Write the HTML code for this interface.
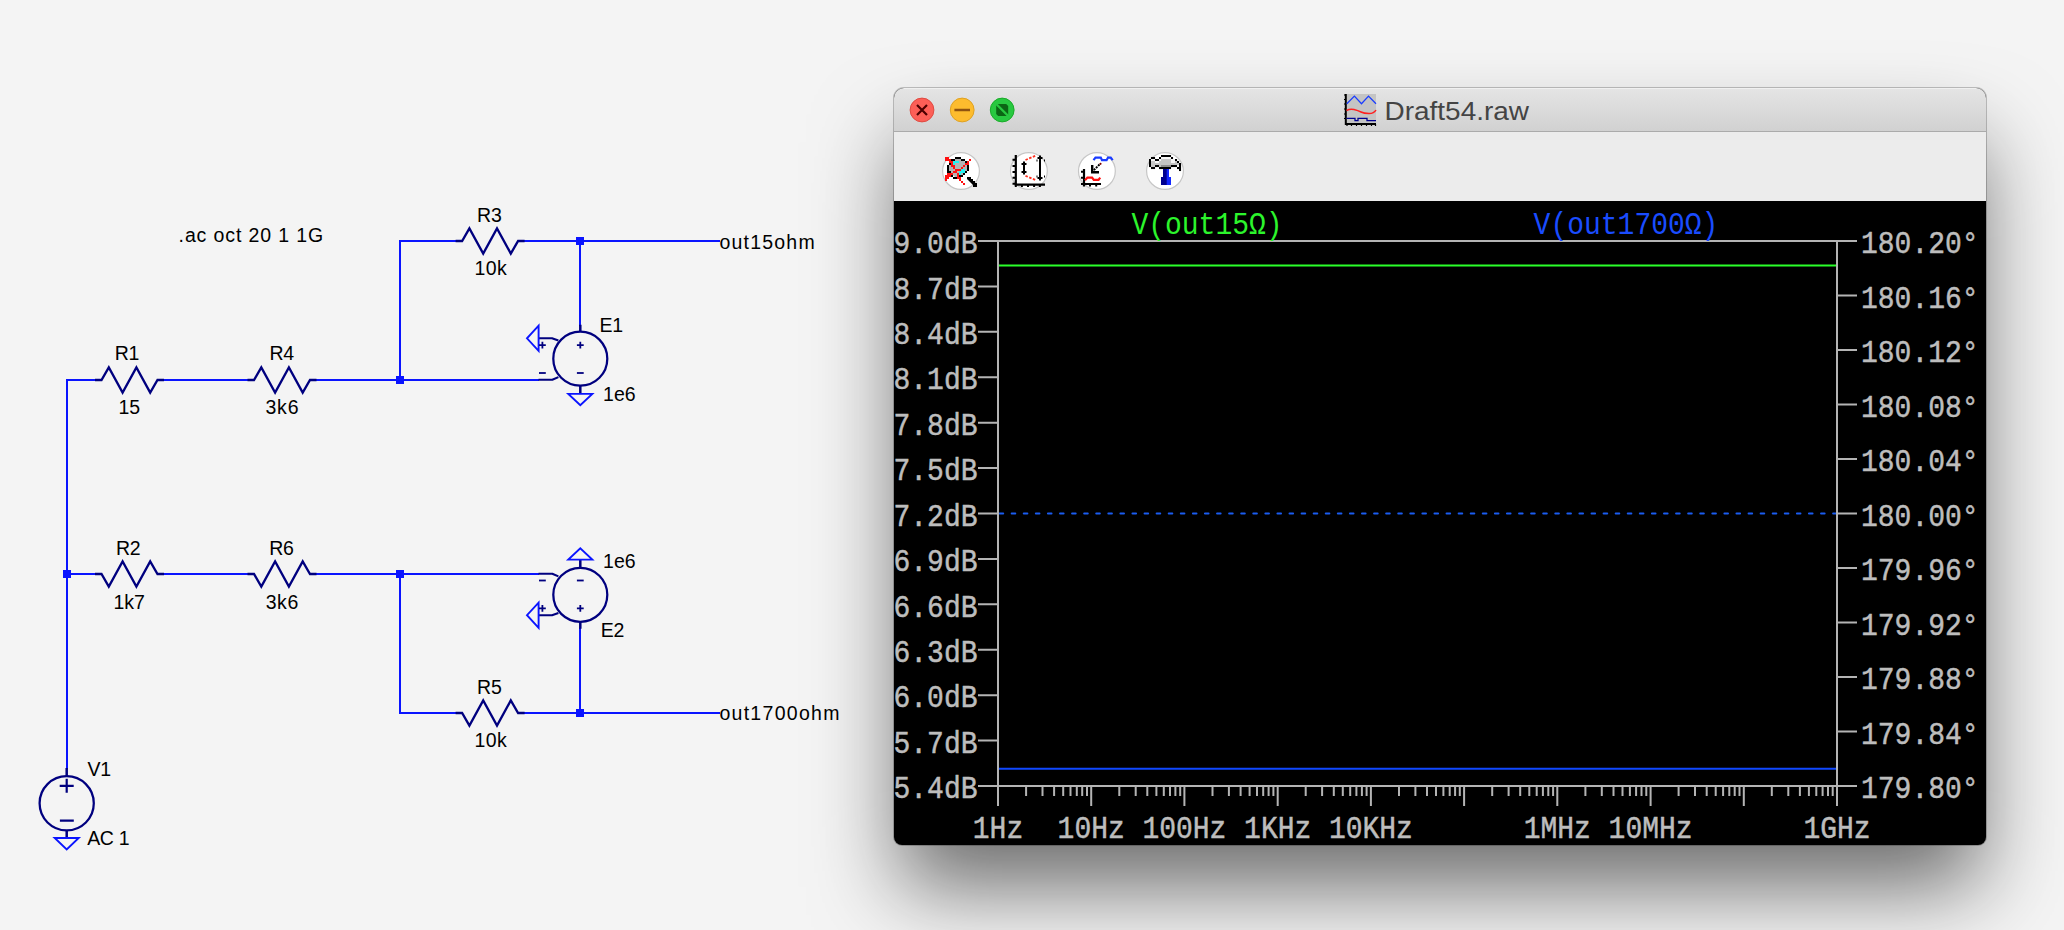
<!DOCTYPE html>
<html><head><meta charset="utf-8"><style>
html,body{margin:0;padding:0;width:2064px;height:930px;overflow:hidden;background:#f4f4f4;font-family:"Liberation Sans",sans-serif}
</style></head><body>
<svg width="2064" height="930" style="position:absolute;left:0;top:0" font-family="Liberation Sans, sans-serif">
<path d="M67,768 L67,380 L95,380" fill="none" stroke="#0a14ff" stroke-width="2" stroke-linejoin="miter" stroke-linecap="square"/>
<path d="M164,380 L247.5,380" fill="none" stroke="#0a14ff" stroke-width="2" stroke-linejoin="miter" stroke-linecap="square"/>
<path d="M316.5,380 L538,380" fill="none" stroke="#0a14ff" stroke-width="2" stroke-linejoin="miter" stroke-linecap="square"/>
<path d="M400,380 L400,241 L455.6,241" fill="none" stroke="#0a14ff" stroke-width="2" stroke-linejoin="miter" stroke-linecap="square"/>
<path d="M524.8,241 L719,241" fill="none" stroke="#0a14ff" stroke-width="2" stroke-linejoin="miter" stroke-linecap="square"/>
<path d="M580,241 L580,325" fill="none" stroke="#0a14ff" stroke-width="2" stroke-linejoin="miter" stroke-linecap="square"/>
<rect x="396" y="376" width="8" height="8" fill="#0a14ff"/>
<rect x="576" y="237" width="8" height="8" fill="#0a14ff"/>
<path d="M67,574 L95,574" fill="none" stroke="#0a14ff" stroke-width="2" stroke-linejoin="miter" stroke-linecap="square"/>
<path d="M164,574 L247.5,574" fill="none" stroke="#0a14ff" stroke-width="2" stroke-linejoin="miter" stroke-linecap="square"/>
<path d="M316.5,574 L538,574" fill="none" stroke="#0a14ff" stroke-width="2" stroke-linejoin="miter" stroke-linecap="square"/>
<path d="M400,574 L400,713 L455.6,713" fill="none" stroke="#0a14ff" stroke-width="2" stroke-linejoin="miter" stroke-linecap="square"/>
<path d="M524.8,713 L719,713" fill="none" stroke="#0a14ff" stroke-width="2" stroke-linejoin="miter" stroke-linecap="square"/>
<path d="M580,629 L580,713" fill="none" stroke="#0a14ff" stroke-width="2" stroke-linejoin="miter" stroke-linecap="square"/>
<rect x="63" y="570" width="8" height="8" fill="#0a14ff"/>
<rect x="396" y="570" width="8" height="8" fill="#0a14ff"/>
<rect x="576" y="709" width="8" height="8" fill="#0a14ff"/>
<path d="M95.00,380.00 L101.50,380.00 L108.80,367.40 L122.60,392.60 L136.40,367.40 L150.20,392.60 L157.50,380.00 L164.00,380.00" fill="none" stroke="#00007f" stroke-width="2.3" stroke-linejoin="miter" stroke-miterlimit="10"/>
<path d="M247.50,380.00 L254.00,380.00 L261.30,367.40 L275.10,392.60 L288.90,367.40 L302.70,392.60 L310.00,380.00 L316.50,380.00" fill="none" stroke="#00007f" stroke-width="2.3" stroke-linejoin="miter" stroke-miterlimit="10"/>
<path d="M455.60,241.00 L462.10,241.00 L469.40,228.40 L483.20,253.60 L497.00,228.40 L510.80,253.60 L518.10,241.00 L524.60,241.00" fill="none" stroke="#00007f" stroke-width="2.3" stroke-linejoin="miter" stroke-miterlimit="10"/>
<path d="M95.00,574.00 L101.50,574.00 L108.80,586.60 L122.60,561.40 L136.40,586.60 L150.20,561.40 L157.50,574.00 L164.00,574.00" fill="none" stroke="#00007f" stroke-width="2.3" stroke-linejoin="miter" stroke-miterlimit="10"/>
<path d="M247.50,574.00 L254.00,574.00 L261.30,586.60 L275.10,561.40 L288.90,586.60 L302.70,561.40 L310.00,574.00 L316.50,574.00" fill="none" stroke="#00007f" stroke-width="2.3" stroke-linejoin="miter" stroke-miterlimit="10"/>
<path d="M455.60,713.00 L462.10,713.00 L469.40,725.60 L483.20,700.40 L497.00,725.60 L510.80,700.40 L518.10,713.00 L524.60,713.00" fill="none" stroke="#00007f" stroke-width="2.3" stroke-linejoin="miter" stroke-miterlimit="10"/>
<circle cx="580.3" cy="358.7" r="27" fill="none" stroke="#00007f" stroke-width="2.25"/>
<path d="M580.3,324.7 L580.3,331.7 M580.3,385.7 L580.3,393.4" stroke="#00007f" stroke-width="2.5" fill="none"/>
<path d="M568.3,393.9 L592.3,393.9 L580.3,405.3 Z" fill="none" stroke="#0a14ff" stroke-width="1.9"/>
<path d="M539,338.3 L552,338.3 L558.4,340.59999999999997" stroke="#00007f" stroke-width="2.1" fill="none" stroke-linejoin="round"/>
<path d="M538.6,325.59999999999997 L538.6,350.8 L527,338.3 Z" fill="none" stroke="#0a14ff" stroke-width="1.9"/>
<path d="M538.5,379.8 L552.3,379.8 L558.4,377.09999999999997" stroke="#00007f" stroke-width="2.1" fill="none" stroke-linejoin="round"/>
<path d="M539.0,345.09999999999997 L545.8,345.09999999999997 M542.4,341.7 L542.4,348.49999999999994" stroke="#00007f" stroke-width="1.8"/>
<path d="M539.0,373.0 L545.8,373.0" stroke="#00007f" stroke-width="1.8"/>
<path d="M576.9,345.09999999999997 L583.6999999999999,345.09999999999997 M580.3,341.7 L580.3,348.49999999999994" stroke="#00007f" stroke-width="1.8"/>
<path d="M576.9,373.0 L583.6999999999999,373.0" stroke="#00007f" stroke-width="1.8"/>
<circle cx="580.3" cy="594.8" r="27" fill="none" stroke="#00007f" stroke-width="2.25"/>
<path d="M580.3,628.8 L580.3,621.8 M580.3,567.8 L580.3,560.0999999999999" stroke="#00007f" stroke-width="2.5" fill="none"/>
<path d="M568.3,559.5999999999999 L592.3,559.5999999999999 L580.3,548.1999999999999 Z" fill="none" stroke="#0a14ff" stroke-width="1.9"/>
<path d="M539,615.1999999999999 L552,615.1999999999999 L558.4,612.9" stroke="#00007f" stroke-width="2.1" fill="none" stroke-linejoin="round"/>
<path d="M538.6,627.9 L538.6,602.6999999999999 L527,615.1999999999999 Z" fill="none" stroke="#0a14ff" stroke-width="1.9"/>
<path d="M538.5,573.6999999999999 L552.3,573.6999999999999 L558.4,576.4" stroke="#00007f" stroke-width="2.1" fill="none" stroke-linejoin="round"/>
<path d="M539.0,608.4 L545.8,608.4 M542.4,605.0 L542.4,611.8" stroke="#00007f" stroke-width="1.8"/>
<path d="M539.0,580.5 L545.8,580.5" stroke="#00007f" stroke-width="1.8"/>
<path d="M576.9,608.4 L583.6999999999999,608.4 M580.3,605.0 L580.3,611.8" stroke="#00007f" stroke-width="1.8"/>
<path d="M576.9,580.5 L583.6999999999999,580.5" stroke="#00007f" stroke-width="1.8"/>
<circle cx="66.7" cy="803.3" r="27.1" fill="none" stroke="#00007f" stroke-width="2.25"/>
<path d="M66.7,768 L66.7,776 M66.7,830 L66.7,837.5" stroke="#00007f" stroke-width="2.5"/>
<path d="M59.7,785.8 L73.7,785.8 M66.7,778.8 L66.7,792.8 M59.9,820.6 L73.8,820.6" stroke="#00007f" stroke-width="2.2"/>
<path d="M54.7,838 L78.7,838 L66.7,849.4 Z" fill="none" stroke="#0a14ff" stroke-width="1.9"/>
<text x="114.65" y="360" font-size="19.5" letter-spacing="-0.30">R1</text>
<text x="118.62" y="414" font-size="19.5" letter-spacing="-0.30">15</text>
<text x="269.40" y="359.8" font-size="19.5" letter-spacing="-0.30">R4</text>
<text x="265.40" y="414.1" font-size="19.5" letter-spacing="0.85">3k6</text>
<text x="477.10" y="221.9" font-size="19.5" letter-spacing="-0.30">R3</text>
<text x="474.40" y="275.3" font-size="19.5" letter-spacing="0.43">10k</text>
<text x="116.00" y="555.1" font-size="19.5" letter-spacing="-0.30">R2</text>
<text x="113.50" y="608.7" font-size="19.5" letter-spacing="0.00">1k7</text>
<text x="269.30" y="555.1" font-size="19.5" letter-spacing="-0.30">R6</text>
<text x="265.70" y="608.7" font-size="19.5" letter-spacing="0.55">3k6</text>
<text x="477.10" y="694.4" font-size="19.5" letter-spacing="-0.30">R5</text>
<text x="474.40" y="747.3" font-size="19.5" letter-spacing="0.43">10k</text>
<text x="178.60" y="241.8" font-size="19.5" letter-spacing="0.88">.ac oct 20 1 1G</text>
<text x="719.40" y="249" font-size="19.5" letter-spacing="1.22">out15ohm</text>
<text x="719.40" y="719.8" font-size="19.5" letter-spacing="1.29">out1700ohm</text>
<text x="599.43" y="332.2" font-size="19.5" letter-spacing="-0.30">E1</text>
<text x="603.00" y="400.8" font-size="19.5" letter-spacing="0.05">1e6</text>
<text x="600.68" y="637" font-size="19.5" letter-spacing="-0.30">E2</text>
<text x="603.00" y="567.8" font-size="19.5" letter-spacing="0.05">1e6</text>
<text x="87.47" y="775.8" font-size="19.5" letter-spacing="-0.30">V1</text>
<text x="87.17" y="844.6" font-size="19.5" letter-spacing="-0.30">AC 1</text>
</svg>
<div id="win" style="position:absolute;left:894px;top:88px;width:1092px;height:757px;border-radius:10px 10px 8px 8px;box-shadow:0 0 0 1px rgba(0,0,0,0.22),0 48px 85px -6px rgba(0,0,0,0.56);overflow:hidden;background:#000">
<div style="position:absolute;left:0;top:0;width:100%;height:43px;background:linear-gradient(#f0f0f0 0px,#f0f0f0 1px,#e4e4e4 1.5px,#d1d1d1 43px)"></div>
<div style="position:absolute;left:0;top:43px;width:100%;height:1px;background:#ababab"></div>
<div style="position:absolute;left:0;top:44px;width:100%;height:69px;background:#ececec"></div>
<svg width="1092" height="757" style="position:absolute;left:0;top:0">
<circle cx="28" cy="22" r="11.9" fill="#fc5f57" stroke="#de4a41" stroke-width="1"/>
<circle cx="68.20000000000005" cy="22" r="11.9" fill="#fdbc2e" stroke="#dea123" stroke-width="1"/>
<circle cx="108.20000000000005" cy="22" r="11.9" fill="#28c840" stroke="#1aab29" stroke-width="1"/>
<path d="M23,17 L33,27 M33,17 L23,27" stroke="#4d0000" stroke-width="2.2"/>
<path d="M60.40000000000005,22 L76.00000000000004,22" stroke="#8f5310" stroke-width="2.3"/>
<path d="M102.20000000000005,16 L112.20000000000005,16 L114.20000000000005,18 L114.20000000000005,28 L104.20000000000005,28 L102.20000000000005,26 Z" fill="#0b6514"/>
<path d="M101.20000000000005,15 L115.20000000000005,29" stroke="#28c840" stroke-width="2.4"/>
<g transform="translate(-894,-88)">
<path d="M998,241 L1837,241 M998,241 L998,786 M1837,241 L1837,786 M998,786 L1837,786" stroke="#b4b4b4" stroke-width="2" fill="none"/>
<text transform="translate(977.5,253.2) scale(1,1.14)" text-anchor="end" font-family="Liberation Mono, monospace" font-size="28" fill="#bdbdbd" stroke="#bdbdbd" stroke-width="0.45">9.0dB</text>
<text transform="translate(977.5,298.6) scale(1,1.14)" text-anchor="end" font-family="Liberation Mono, monospace" font-size="28" fill="#bdbdbd" stroke="#bdbdbd" stroke-width="0.45">8.7dB</text>
<text transform="translate(977.5,344.0) scale(1,1.14)" text-anchor="end" font-family="Liberation Mono, monospace" font-size="28" fill="#bdbdbd" stroke="#bdbdbd" stroke-width="0.45">8.4dB</text>
<text transform="translate(977.5,389.4) scale(1,1.14)" text-anchor="end" font-family="Liberation Mono, monospace" font-size="28" fill="#bdbdbd" stroke="#bdbdbd" stroke-width="0.45">8.1dB</text>
<text transform="translate(977.5,434.9) scale(1,1.14)" text-anchor="end" font-family="Liberation Mono, monospace" font-size="28" fill="#bdbdbd" stroke="#bdbdbd" stroke-width="0.45">7.8dB</text>
<text transform="translate(977.5,480.3) scale(1,1.14)" text-anchor="end" font-family="Liberation Mono, monospace" font-size="28" fill="#bdbdbd" stroke="#bdbdbd" stroke-width="0.45">7.5dB</text>
<text transform="translate(977.5,525.7) scale(1,1.14)" text-anchor="end" font-family="Liberation Mono, monospace" font-size="28" fill="#bdbdbd" stroke="#bdbdbd" stroke-width="0.45">7.2dB</text>
<text transform="translate(977.5,571.1) scale(1,1.14)" text-anchor="end" font-family="Liberation Mono, monospace" font-size="28" fill="#bdbdbd" stroke="#bdbdbd" stroke-width="0.45">6.9dB</text>
<text transform="translate(977.5,616.5) scale(1,1.14)" text-anchor="end" font-family="Liberation Mono, monospace" font-size="28" fill="#bdbdbd" stroke="#bdbdbd" stroke-width="0.45">6.6dB</text>
<text transform="translate(977.5,662.0) scale(1,1.14)" text-anchor="end" font-family="Liberation Mono, monospace" font-size="28" fill="#bdbdbd" stroke="#bdbdbd" stroke-width="0.45">6.3dB</text>
<text transform="translate(977.5,707.4) scale(1,1.14)" text-anchor="end" font-family="Liberation Mono, monospace" font-size="28" fill="#bdbdbd" stroke="#bdbdbd" stroke-width="0.45">6.0dB</text>
<text transform="translate(977.5,752.8) scale(1,1.14)" text-anchor="end" font-family="Liberation Mono, monospace" font-size="28" fill="#bdbdbd" stroke="#bdbdbd" stroke-width="0.45">5.7dB</text>
<text transform="translate(977.5,798.2) scale(1,1.14)" text-anchor="end" font-family="Liberation Mono, monospace" font-size="28" fill="#bdbdbd" stroke="#bdbdbd" stroke-width="0.45">5.4dB</text>
<text transform="translate(1861,253.2) scale(1,1.14)" font-family="Liberation Mono, monospace" font-size="28" fill="#bdbdbd" stroke="#bdbdbd" stroke-width="0.45">180.20°</text>
<text transform="translate(1861,307.7) scale(1,1.14)" font-family="Liberation Mono, monospace" font-size="28" fill="#bdbdbd" stroke="#bdbdbd" stroke-width="0.45">180.16°</text>
<text transform="translate(1861,362.2) scale(1,1.14)" font-family="Liberation Mono, monospace" font-size="28" fill="#bdbdbd" stroke="#bdbdbd" stroke-width="0.45">180.12°</text>
<text transform="translate(1861,416.7) scale(1,1.14)" font-family="Liberation Mono, monospace" font-size="28" fill="#bdbdbd" stroke="#bdbdbd" stroke-width="0.45">180.08°</text>
<text transform="translate(1861,471.2) scale(1,1.14)" font-family="Liberation Mono, monospace" font-size="28" fill="#bdbdbd" stroke="#bdbdbd" stroke-width="0.45">180.04°</text>
<text transform="translate(1861,525.7) scale(1,1.14)" font-family="Liberation Mono, monospace" font-size="28" fill="#bdbdbd" stroke="#bdbdbd" stroke-width="0.45">180.00°</text>
<text transform="translate(1861,580.2) scale(1,1.14)" font-family="Liberation Mono, monospace" font-size="28" fill="#bdbdbd" stroke="#bdbdbd" stroke-width="0.45">179.96°</text>
<text transform="translate(1861,634.7) scale(1,1.14)" font-family="Liberation Mono, monospace" font-size="28" fill="#bdbdbd" stroke="#bdbdbd" stroke-width="0.45">179.92°</text>
<text transform="translate(1861,689.2) scale(1,1.14)" font-family="Liberation Mono, monospace" font-size="28" fill="#bdbdbd" stroke="#bdbdbd" stroke-width="0.45">179.88°</text>
<text transform="translate(1861,743.7) scale(1,1.14)" font-family="Liberation Mono, monospace" font-size="28" fill="#bdbdbd" stroke="#bdbdbd" stroke-width="0.45">179.84°</text>
<text transform="translate(1861,798.2) scale(1,1.14)" font-family="Liberation Mono, monospace" font-size="28" fill="#bdbdbd" stroke="#bdbdbd" stroke-width="0.45">179.80°</text>
<path d="M978,241.0 L998,241.0 M978,286.4 L998,286.4 M978,331.8 L998,331.8 M978,377.2 L998,377.2 M978,422.7 L998,422.7 M978,468.1 L998,468.1 M978,513.5 L998,513.5 M978,558.9 L998,558.9 M978,604.3 L998,604.3 M978,649.8 L998,649.8 M978,695.2 L998,695.2 M978,740.6 L998,740.6 M978,786.0 L998,786.0 M1837,241.0 L1857,241.0 M1837,295.5 L1857,295.5 M1837,350.0 L1857,350.0 M1837,404.5 L1857,404.5 M1837,459.0 L1857,459.0 M1837,513.5 L1857,513.5 M1837,568.0 L1857,568.0 M1837,622.5 L1857,622.5 M1837,677.0 L1857,677.0 M1837,731.5 L1857,731.5 M1837,786.0 L1857,786.0 M998.0,786 L998.0,806 M1026.1,786 L1026.1,796 M1042.5,786 L1042.5,796 M1054.1,786 L1054.1,796 M1063.2,786 L1063.2,796 M1070.5,786 L1070.5,796 M1076.8,786 L1076.8,796 M1082.2,786 L1082.2,796 M1087.0,786 L1087.0,796 M1091.2,786 L1091.2,806 M1119.3,786 L1119.3,796 M1135.7,786 L1135.7,796 M1147.3,786 L1147.3,796 M1156.4,786 L1156.4,796 M1163.8,786 L1163.8,796 M1170.0,786 L1170.0,796 M1175.4,786 L1175.4,796 M1180.2,786 L1180.2,796 M1184.4,786 L1184.4,806 M1212.5,786 L1212.5,796 M1228.9,786 L1228.9,796 M1240.6,786 L1240.6,796 M1249.6,786 L1249.6,796 M1257.0,786 L1257.0,796 M1263.2,786 L1263.2,796 M1268.6,786 L1268.6,796 M1273.4,786 L1273.4,796 M1277.7,786 L1277.7,806 M1305.7,786 L1305.7,796 M1322.1,786 L1322.1,796 M1333.8,786 L1333.8,796 M1342.8,786 L1342.8,796 M1350.2,786 L1350.2,796 M1356.4,786 L1356.4,796 M1361.9,786 L1361.9,796 M1366.6,786 L1366.6,796 M1370.9,786 L1370.9,806 M1399.0,786 L1399.0,796 M1415.4,786 L1415.4,796 M1427.0,786 L1427.0,796 M1436.0,786 L1436.0,796 M1443.4,786 L1443.4,796 M1449.7,786 L1449.7,796 M1455.1,786 L1455.1,796 M1459.8,786 L1459.8,796 M1464.1,786 L1464.1,806 M1492.2,786 L1492.2,796 M1508.6,786 L1508.6,796 M1520.2,786 L1520.2,796 M1529.3,786 L1529.3,796 M1536.7,786 L1536.7,796 M1542.9,786 L1542.9,796 M1548.3,786 L1548.3,796 M1553.1,786 L1553.1,796 M1557.3,786 L1557.3,806 M1585.4,786 L1585.4,796 M1601.8,786 L1601.8,796 M1613.5,786 L1613.5,796 M1622.5,786 L1622.5,796 M1629.9,786 L1629.9,796 M1636.1,786 L1636.1,796 M1641.5,786 L1641.5,796 M1646.3,786 L1646.3,796 M1650.6,786 L1650.6,806 M1678.6,786 L1678.6,796 M1695.0,786 L1695.0,796 M1706.7,786 L1706.7,796 M1715.7,786 L1715.7,796 M1723.1,786 L1723.1,796 M1729.3,786 L1729.3,796 M1734.7,786 L1734.7,796 M1739.5,786 L1739.5,796 M1743.8,786 L1743.8,806 M1771.8,786 L1771.8,796 M1788.3,786 L1788.3,796 M1799.9,786 L1799.9,796 M1808.9,786 L1808.9,796 M1816.3,786 L1816.3,796 M1822.6,786 L1822.6,796 M1828.0,786 L1828.0,796 M1832.7,786 L1832.7,796 M1837.0,786 L1837.0,806" stroke="#b4b4b4" stroke-width="2" fill="none"/>
<text transform="translate(998.0,838.2) scale(1,1.14)" text-anchor="middle" font-family="Liberation Mono, monospace" font-size="28" fill="#bdbdbd" stroke="#bdbdbd" stroke-width="0.45">1Hz</text>
<text transform="translate(1091.2,838.2) scale(1,1.14)" text-anchor="middle" font-family="Liberation Mono, monospace" font-size="28" fill="#bdbdbd" stroke="#bdbdbd" stroke-width="0.45">10Hz</text>
<text transform="translate(1184.4,838.2) scale(1,1.14)" text-anchor="middle" font-family="Liberation Mono, monospace" font-size="28" fill="#bdbdbd" stroke="#bdbdbd" stroke-width="0.45">100Hz</text>
<text transform="translate(1277.7,838.2) scale(1,1.14)" text-anchor="middle" font-family="Liberation Mono, monospace" font-size="28" fill="#bdbdbd" stroke="#bdbdbd" stroke-width="0.45">1KHz</text>
<text transform="translate(1370.9,838.2) scale(1,1.14)" text-anchor="middle" font-family="Liberation Mono, monospace" font-size="28" fill="#bdbdbd" stroke="#bdbdbd" stroke-width="0.45">10KHz</text>
<text transform="translate(1557.3,838.2) scale(1,1.14)" text-anchor="middle" font-family="Liberation Mono, monospace" font-size="28" fill="#bdbdbd" stroke="#bdbdbd" stroke-width="0.45">1MHz</text>
<text transform="translate(1650.6,838.2) scale(1,1.14)" text-anchor="middle" font-family="Liberation Mono, monospace" font-size="28" fill="#bdbdbd" stroke="#bdbdbd" stroke-width="0.45">10MHz</text>
<text transform="translate(1837.0,838.2) scale(1,1.14)" text-anchor="middle" font-family="Liberation Mono, monospace" font-size="28" fill="#bdbdbd" stroke="#bdbdbd" stroke-width="0.45">1GHz</text>
<path d="M999,265.4 L1836,265.4" stroke="#2aff2a" stroke-width="2"/>
<path d="M999,768.7 L1836,768.7" stroke="#1048ff" stroke-width="2"/>
<path d="M999.6,513.4 L1837,513.4" stroke="#1a5cf0" stroke-width="2" stroke-linecap="round" stroke-dasharray="3.6,8.48"/>
<path d="M998,241 L998,786 M1837,241 L1837,786" stroke="#b4b4b4" stroke-width="2" fill="none"/>
<text transform="translate(1207,233.8) scale(1,1.14)" text-anchor="middle" font-family="Liberation Mono, monospace" font-size="28" fill="#2cf52c">V(out15Ω)</text>
<text transform="translate(1626,233.8) scale(1,1.14)" text-anchor="middle" font-family="Liberation Mono, monospace" font-size="28" fill="#1a4cff">V(out1700Ω)</text>
</g>
<g transform="translate(-894,-88)">
<text x="1384.5" y="120" font-family="Liberation Sans, sans-serif" font-size="25" fill="#444444" textLength="144.5" lengthAdjust="spacingAndGlyphs">Draft54.raw</text>
<rect x="1346" y="94" width="30" height="29" fill="#c4c4c4"/>
<path d="M1345.8,94 L1345.8,124 L1376,124" stroke="#000" stroke-width="2" fill="none"/>
<path d="M1344,95 L1346,95 M1344,99.5 L1346,99.5 M1344,104 L1346,104 M1344,109 L1346,109 M1344,114 L1346,114 M1344,118.5 L1346,118.5 M1347,124 L1347,126 M1351.5,124 L1351.5,126 M1356.5,124 L1356.5,126 M1361.5,124 L1361.5,126 M1366.5,124 L1366.5,126 M1371.5,124 L1371.5,126 M1375.5,124 L1375.5,126" stroke="#000" stroke-width="1.2"/>
<path d="M1346.8,103.8 L1354.4,96.1 L1361.5,103.8 L1368.5,96.1 L1376,103.8" stroke="#1a3cff" stroke-width="1.3" fill="none"/>
<path d="M1346.5,110.5 Q1350,108.5 1354,109.5 T1361,112 T1369,113.5 T1376,110" stroke="#ff2020" stroke-width="1.5" fill="none"/>
<path d="M1346.5,118.3 L1355,118.3 L1355,120.6 L1358,120.6 L1358,118.3 L1367,118.3 L1367,120.6 L1376,120.6" stroke="#000090" stroke-width="1.3" fill="none"/>
</g>
<g transform="translate(-894,-88)">
<circle cx="961" cy="171" r="18.4" fill="#fff" stroke="#c6c6c6" stroke-width="1.2"/>
<circle cx="1028.9" cy="171" r="18.4" fill="#fff" stroke="#c6c6c6" stroke-width="1.2"/>
<circle cx="1096.9" cy="171" r="18.4" fill="#fff" stroke="#c6c6c6" stroke-width="1.2"/>
<circle cx="1165" cy="171" r="18.4" fill="#fff" stroke="#c6c6c6" stroke-width="1.2"/>
<path d="M955,159 L961,159 L967,163 L967,171 L961,177 L955,177 L949,171 L949,163 Z" fill="#b4b4b4"/>
<rect x="953" y="161" width="6" height="2" fill="#22f2f2"/>
<rect x="953" y="163" width="2" height="2" fill="#22f2f2"/>
<rect x="961" y="169" width="4" height="2" fill="#22f2f2"/>
<rect x="959" y="171" width="6" height="2" fill="#22f2f2"/>
<rect x="957" y="173" width="4" height="2" fill="#22f2f2"/>
<rect x="955" y="157" width="6" height="2" fill="#000"/>
<rect x="951" y="159" width="4" height="2" fill="#000"/>
<rect x="961" y="159" width="4" height="2" fill="#000"/>
<rect x="949" y="163" width="2" height="2" fill="#000"/>
<rect x="947" y="165" width="2" height="8" fill="#000"/>
<rect x="949" y="171" width="2" height="2" fill="#000"/>
<rect x="951" y="173" width="2" height="4" fill="#000"/>
<rect x="953" y="177" width="6" height="2" fill="#000"/>
<rect x="959" y="175" width="4" height="2" fill="#000"/>
<rect x="963" y="173" width="2" height="2" fill="#000"/>
<rect x="965" y="171" width="2" height="2" fill="#000"/>
<rect x="967" y="163" width="2" height="8" fill="#000"/>
<rect x="965" y="161" width="2" height="2" fill="#000"/>
<rect x="945" y="157" width="4" height="4" fill="#ff1010"/>
<rect x="949" y="159" width="2" height="4" fill="#ff1010"/>
<rect x="951" y="161" width="2" height="4" fill="#ff1010"/>
<rect x="951" y="165" width="2" height="2" fill="#ff1010"/>
<rect x="953" y="165" width="2" height="4" fill="#ff1010"/>
<rect x="955" y="169" width="2" height="4" fill="#ff1010"/>
<rect x="957" y="173" width="2" height="2" fill="#ff1010"/>
<rect x="957" y="175" width="2" height="4" fill="#ff1010"/>
<rect x="959" y="177" width="2" height="4" fill="#ff1010"/>
<rect x="961" y="181" width="2" height="2" fill="#ff1010"/>
<rect x="963" y="183" width="2" height="2" fill="#ff1010"/>
<rect x="969" y="159" width="2" height="2" fill="#ff1010"/>
<rect x="967" y="161" width="2" height="2" fill="#ff1010"/>
<rect x="965" y="163" width="4" height="2" fill="#ff1010"/>
<rect x="963" y="165" width="2" height="2" fill="#ff1010"/>
<rect x="961" y="167" width="2" height="2" fill="#ff1010"/>
<rect x="959" y="169" width="2" height="2" fill="#ff1010"/>
<rect x="957" y="169" width="2" height="2" fill="#ff1010"/>
<rect x="955" y="171" width="2" height="2" fill="#ff1010"/>
<rect x="953" y="171" width="2" height="2" fill="#ff1010"/>
<rect x="951" y="173" width="2" height="2" fill="#ff1010"/>
<rect x="947" y="173" width="4" height="4" fill="#ff1010"/>
<rect x="945" y="175" width="4" height="4" fill="#ff1010"/>
<rect x="945" y="179" width="2" height="2" fill="#ff1010"/>
<rect x="967" y="177" width="4" height="2" fill="#000"/>
<rect x="969" y="179" width="4" height="2" fill="#000"/>
<rect x="971" y="181" width="4" height="2" fill="#000"/>
<rect x="973" y="183" width="4" height="4" fill="#000"/>
<path d="M967,177 L969,177 L977,185 L977,187 L975,187 L967,179 Z" fill="#000"/>
<path d="M1015.8,155 L1015.8,184.6 L1045,184.6" stroke="#000" stroke-width="2.2" fill="none"/>
<path d="M1012.5,159.8 L1015.8,159.8 M1012.5,165.9 L1015.8,165.9 M1012.5,172 L1015.8,172 M1012.5,177.8 L1015.8,177.8 M1012.5,183.8 L1015.8,183.8 M1015.8,184.6 L1015.8,187 M1021.9,184.6 L1021.9,187 M1028,184.6 L1028,187 M1034.1,184.6 L1034.1,187 M1039.9,184.6 L1039.9,187" stroke="#000" stroke-width="2"/>
<path d="M1024,161.5 L1024,174.5 M1021.5,164 L1026.5,164 M1021.5,172 L1026.5,172" stroke="#000" stroke-width="2"/>
<path d="M1040,155.5 L1040,180.5 M1037.5,158 L1042.5,158 M1037.5,178 L1042.5,178" stroke="#000" stroke-width="2"/>
<path d="M1036.5,160.5 L1037.5,160.5 M1044,160.5 L1045,160.5 M1036.5,176.5 L1037.5,176.5 M1044,176.5 L1045,176.5" stroke="#000" stroke-width="2"/>
<path d="M1025.5,160 L1036,155.5 M1025.5,175.8 L1036,180.2" stroke="#ff3020" stroke-width="1.8" stroke-dasharray="2.5,1.5" fill="none"/>
<path d="M1093.5,160.2 L1095.5,157.6 L1100.8,157.6 L1102,160.2 L1106.6,160.2 L1108,157.6 L1110.7,157.6 L1112.7,160.2" stroke="#1a3cff" stroke-width="2.2" fill="none"/>
<path d="M1099.5,164.5 L1093,171" stroke="#000" stroke-width="2" stroke-dasharray="2,1"/>
<circle cx="1100.5" cy="163.8" r="1.1" fill="#800000"/>
<path d="M1092.2,165 L1092.2,172.2 L1099,172.2" stroke="#000" stroke-width="2.4" fill="none"/>
<path d="M1084,169 L1084,186.6 M1081,184 L1101,184" stroke="#000" stroke-width="2.2" fill="none"/>
<path d="M1081,171.7 L1084,171.7 M1081,177.8 L1084,177.8 M1090,184 L1090,186.6 M1096.2,184 L1096.2,186.6" stroke="#000" stroke-width="2"/>
<path d="M1085,180.2 L1087.4,177.6 L1092.1,177.6 L1093.8,179.9 L1098.5,179.9 L1100.2,177.6" stroke="#ff1010" stroke-width="2.2" fill="none"/>
<rect x="1161" y="155" width="2.05" height="2.05" fill="#000"/>
<rect x="1163" y="155" width="2.05" height="2.05" fill="#000"/>
<rect x="1165" y="155" width="2.05" height="2.05" fill="#000"/>
<rect x="1167" y="155" width="2.05" height="2.05" fill="#000"/>
<rect x="1169" y="155" width="2.05" height="2.05" fill="#000"/>
<rect x="1151" y="157" width="2.05" height="2.05" fill="#000"/>
<rect x="1153" y="157" width="2.05" height="2.05" fill="#000"/>
<rect x="1159" y="157" width="2.05" height="2.05" fill="#000"/>
<rect x="1161" y="157" width="2.05" height="2.05" fill="#f6f6f6"/>
<rect x="1163" y="157" width="2.05" height="2.05" fill="#f6f6f6"/>
<rect x="1165" y="157" width="2.05" height="2.05" fill="#f6f6f6"/>
<rect x="1167" y="157" width="2.05" height="2.05" fill="#f6f6f6"/>
<rect x="1169" y="157" width="2.05" height="2.05" fill="#f6f6f6"/>
<rect x="1171" y="157" width="2.05" height="2.05" fill="#000"/>
<rect x="1149" y="159" width="2.05" height="2.05" fill="#000"/>
<rect x="1151" y="159" width="2.05" height="2.05" fill="#f6f6f6"/>
<rect x="1153" y="159" width="2.05" height="2.05" fill="#f6f6f6"/>
<rect x="1155" y="159" width="2.05" height="2.05" fill="#000"/>
<rect x="1157" y="159" width="2.05" height="2.05" fill="#000"/>
<rect x="1159" y="159" width="2.05" height="2.05" fill="#f6f6f6"/>
<rect x="1161" y="159" width="2.05" height="2.05" fill="#c4c4c4"/>
<rect x="1163" y="159" width="2.05" height="2.05" fill="#c4c4c4"/>
<rect x="1165" y="159" width="2.05" height="2.05" fill="#c4c4c4"/>
<rect x="1167" y="159" width="2.05" height="2.05" fill="#c4c4c4"/>
<rect x="1169" y="159" width="2.05" height="2.05" fill="#c4c4c4"/>
<rect x="1171" y="159" width="2.05" height="2.05" fill="#f6f6f6"/>
<rect x="1173" y="159" width="2.05" height="2.05" fill="#f6f6f6"/>
<rect x="1175" y="159" width="2.05" height="2.05" fill="#000"/>
<rect x="1149" y="161" width="2.05" height="2.05" fill="#000"/>
<rect x="1151" y="161" width="2.05" height="2.05" fill="#c4c4c4"/>
<rect x="1153" y="161" width="2.05" height="2.05" fill="#c4c4c4"/>
<rect x="1155" y="161" width="2.05" height="2.05" fill="#f6f6f6"/>
<rect x="1157" y="161" width="2.05" height="2.05" fill="#f6f6f6"/>
<rect x="1159" y="161" width="2.05" height="2.05" fill="#c4c4c4"/>
<rect x="1161" y="161" width="2.05" height="2.05" fill="#c4c4c4"/>
<rect x="1163" y="161" width="2.05" height="2.05" fill="#c4c4c4"/>
<rect x="1165" y="161" width="2.05" height="2.05" fill="#c4c4c4"/>
<rect x="1167" y="161" width="2.05" height="2.05" fill="#c4c4c4"/>
<rect x="1169" y="161" width="2.05" height="2.05" fill="#c4c4c4"/>
<rect x="1171" y="161" width="2.05" height="2.05" fill="#f6f6f6"/>
<rect x="1173" y="161" width="2.05" height="2.05" fill="#f6f6f6"/>
<rect x="1175" y="161" width="2.05" height="2.05" fill="#c4c4c4"/>
<rect x="1177" y="161" width="2.05" height="2.05" fill="#000"/>
<rect x="1149" y="163" width="2.05" height="2.05" fill="#000"/>
<rect x="1151" y="163" width="2.05" height="2.05" fill="#c4c4c4"/>
<rect x="1153" y="163" width="2.05" height="2.05" fill="#c4c4c4"/>
<rect x="1155" y="163" width="2.05" height="2.05" fill="#c4c4c4"/>
<rect x="1157" y="163" width="2.05" height="2.05" fill="#c4c4c4"/>
<rect x="1159" y="163" width="2.05" height="2.05" fill="#c4c4c4"/>
<rect x="1161" y="163" width="2.05" height="2.05" fill="#c4c4c4"/>
<rect x="1163" y="163" width="2.05" height="2.05" fill="#c4c4c4"/>
<rect x="1165" y="163" width="2.05" height="2.05" fill="#c4c4c4"/>
<rect x="1167" y="163" width="2.05" height="2.05" fill="#c4c4c4"/>
<rect x="1169" y="163" width="2.05" height="2.05" fill="#c4c4c4"/>
<rect x="1171" y="163" width="2.05" height="2.05" fill="#c4c4c4"/>
<rect x="1173" y="163" width="2.05" height="2.05" fill="#c4c4c4"/>
<rect x="1175" y="163" width="2.05" height="2.05" fill="#c4c4c4"/>
<rect x="1177" y="163" width="2.05" height="2.05" fill="#c4c4c4"/>
<rect x="1179" y="163" width="2.05" height="2.05" fill="#000"/>
<rect x="1149" y="165" width="2.05" height="2.05" fill="#000"/>
<rect x="1151" y="165" width="2.05" height="2.05" fill="#c4c4c4"/>
<rect x="1153" y="165" width="2.05" height="2.05" fill="#c4c4c4"/>
<rect x="1155" y="165" width="2.05" height="2.05" fill="#000"/>
<rect x="1157" y="165" width="2.05" height="2.05" fill="#000"/>
<rect x="1159" y="165" width="2.05" height="2.05" fill="#c4c4c4"/>
<rect x="1161" y="165" width="2.05" height="2.05" fill="#8e8e8e"/>
<rect x="1163" y="165" width="2.05" height="2.05" fill="#8e8e8e"/>
<rect x="1165" y="165" width="2.05" height="2.05" fill="#8e8e8e"/>
<rect x="1167" y="165" width="2.05" height="2.05" fill="#8e8e8e"/>
<rect x="1169" y="165" width="2.05" height="2.05" fill="#8e8e8e"/>
<rect x="1171" y="165" width="2.05" height="2.05" fill="#000"/>
<rect x="1173" y="165" width="2.05" height="2.05" fill="#000"/>
<rect x="1175" y="165" width="2.05" height="2.05" fill="#000"/>
<rect x="1177" y="165" width="2.05" height="2.05" fill="#f6f6f6"/>
<rect x="1179" y="165" width="2.05" height="2.05" fill="#000"/>
<rect x="1151" y="167" width="2.05" height="2.05" fill="#000"/>
<rect x="1153" y="167" width="2.05" height="2.05" fill="#000"/>
<rect x="1159" y="167" width="2.05" height="2.05" fill="#000"/>
<rect x="1161" y="167" width="2.05" height="2.05" fill="#000"/>
<rect x="1163" y="167" width="2.05" height="2.05" fill="#000"/>
<rect x="1165" y="167" width="2.05" height="2.05" fill="#000"/>
<rect x="1167" y="167" width="2.05" height="2.05" fill="#000"/>
<rect x="1169" y="167" width="2.05" height="2.05" fill="#000"/>
<rect x="1177" y="167" width="2.05" height="2.05" fill="#000"/>
<rect x="1179" y="167" width="2.05" height="2.05" fill="#000"/>
<rect x="1179" y="169" width="2.05" height="2.05" fill="#000"/>
<path d="M1163,169 L1169,169 L1169,177 L1171,177 L1171,185 L1161,185 L1161,177 L1163,177 Z" fill="#000090"/>
<path d="M1166.7,169 L1169,169 L1169,177 L1171,177 L1171,185 L1166.7,185 Z" fill="#1428ff"/>
</g>
</svg>
</div>
</body></html>
